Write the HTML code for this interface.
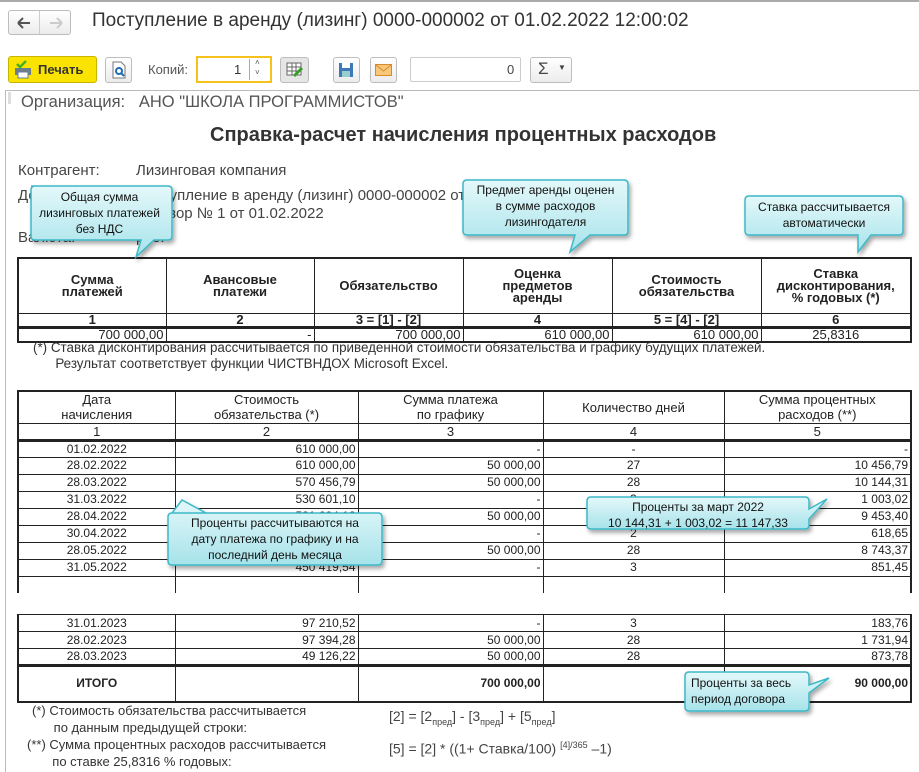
<!DOCTYPE html>
<html><head><meta charset="utf-8">
<style>
*{box-sizing:border-box;margin:0;padding:0}
body{width:919px;height:772px;background:#fff;font-family:"Liberation Sans",sans-serif;color:#333;position:relative;overflow:hidden}
.a{position:absolute}
.btn{position:absolute;border:1px solid #bdbdbd;border-radius:3px;background:linear-gradient(#fff,#ececec)}
table{border-collapse:collapse;position:absolute;font-size:12px;color:#222}
td{border:1px solid #222;padding:0 2px;text-align:center;white-space:nowrap}
.r{text-align:right}
.t1 td{height:13px;line-height:12px}
.t2 td{height:17px;line-height:15px}
.h td{font-size:13px}
.co{position:absolute;font-size:12px;color:#111;text-align:center;line-height:16px}
</style></head><body>
<div class="a" style="left:0;top:0;width:919px;height:2px;background:#aaa"></div>
<div class="btn" style="left:8px;top:10px;width:63px;height:25px"></div>
<div class="a" style="left:39px;top:11px;width:1px;height:23px;background:#ccc"></div>
<svg class="a" style="left:16px;top:16px" width="50" height="14"><path d="M2 7h12M2 7l5-5M2 7l5 5" stroke="#555" stroke-width="2" fill="none"/><path d="M34 7h12M46 7l-5-5M46 7l-5 5" stroke="#ccc" stroke-width="2" fill="none"/></svg>
<div class="a" style="left:92px;top:10px;font-size:19px;color:#333">Поступление в аренду (лизинг) 0000-000002 от 01.02.2022 12:00:02</div>

<div class="a" style="left:8px;top:56px;width:89px;height:27px;background:#fbe300;border:1px solid #c9b400;border-radius:3px"></div>
<svg class="a" style="left:13px;top:60px" width="20" height="20"><rect x="2" y="8" width="16" height="7" fill="#6b7c8e"/><rect x="5" y="12" width="10" height="6" fill="#fff" stroke="#6b7c8e"/><path d="M4 4l3 3 6-6" stroke="#4caf1e" stroke-width="2.5" fill="none"/></svg>
<div class="a" style="left:38px;top:62px;font-size:13px;font-weight:bold;color:#333">Печать</div>
<div class="btn" style="left:105px;top:57px;width:27px;height:26px"></div>
<svg class="a" style="left:111px;top:61px" width="16" height="18"><path d="M2 1h8l4 4v12H2z" fill="#fff" stroke="#777"/><circle cx="8" cy="10" r="3" fill="none" stroke="#1d6db5" stroke-width="2"/><path d="M10 12l3 3" stroke="#1d6db5" stroke-width="2"/></svg>
<div class="a" style="left:148px;top:62px;font-size:13px;color:#555">Копий:</div>
<div class="a" style="left:196px;top:56px;width:76px;height:27px;border:2px solid #f5c21b;background:#fff"></div>
<div class="a" style="left:234px;top:62px;font-size:13px;color:#333">1</div>
<div class="a" style="left:249px;top:59px;width:1px;height:21px;background:#aaa"></div>
<div class="a" style="left:255px;top:58px;font-size:8px;color:#555;line-height:10px">˄<br>˅</div>
<div class="btn" style="left:280px;top:57px;width:29px;height:26px;background:#e6e6e6"></div>
<svg class="a" style="left:286px;top:62px" width="18" height="16"><rect x="1" y="1" width="14" height="12" fill="#fff" stroke="#666"/><path d="M1 5h14M1 9h14M6 1v12M10 1v12" stroke="#666"/><path d="M8 14l8-8" stroke="#3a9c2a" stroke-width="3"/></svg>
<div class="btn" style="left:333px;top:57px;width:27px;height:26px"></div>
<svg class="a" style="left:338px;top:62px" width="16" height="16"><rect x="1" y="1" width="14" height="14" fill="#3d78b8"/><rect x="4" y="1" width="8" height="5" fill="#fff"/><rect x="4" y="9" width="8" height="6" fill="#9cc"/></svg>
<div class="btn" style="left:370px;top:57px;width:27px;height:26px"></div>
<svg class="a" style="left:375px;top:64px" width="17" height="12"><rect x=".5" y=".5" width="16" height="11" fill="#f8c87a" stroke="#d88a2a"/><path d="M1 1l7.5 6 7.5-6" stroke="#d88a2a" fill="none"/></svg>
<div class="a" style="left:410px;top:57px;width:111px;height:25px;border:1px solid #ccc;border-radius:2px"></div>
<div class="a" style="left:507px;top:62px;font-size:13px;color:#444">0</div>
<div class="btn" style="left:530px;top:57px;width:42px;height:26px"></div>
<div class="a" style="left:538px;top:59px;font-size:17px;color:#444">Σ</div>
<div class="a" style="left:558px;top:63px;font-size:8px;color:#444">▼</div>

<div class="a" style="left:5px;top:90px;width:914px;height:1px;background:#bbb"></div>
<div class="a" style="left:5px;top:90px;width:1px;height:682px;background:#bbb"></div>
<div class="a" style="left:8px;top:92px;width:3px;height:12px;background:#ddd"></div>
<div class="a" style="left:21px;top:93px;font-size:16.5px;color:#555">Организация:&nbsp;&nbsp; АНО "ШКОЛА ПРОГРАММИСТОВ"</div>
<div class="a" style="left:210px;top:124px;font-size:20px;font-weight:bold;color:#333">Справка-расчет начисления процентных расходов</div>
<div class="a" style="left:18px;top:162px;font-size:15px;color:#444">Контрагент:</div>
<div class="a" style="left:136px;top:162px;font-size:15px;color:#444">Лизинговая компания</div>
<div class="a" style="left:18px;top:187px;font-size:15px;color:#444">Договор:</div>
<div class="a" style="left:136px;top:187px;font-size:15px;color:#444">Поступление в аренду (лизинг) 0000-000002 от 01.02.2022</div>
<div class="a" style="left:136px;top:205px;font-size:15px;color:#444">Договор № 1 от 01.02.2022</div>
<div class="a" style="left:18px;top:229px;font-size:15px;color:#444">Валюта:</div>
<div class="a" style="left:136px;top:229px;font-size:15px;color:#444">руб.</div>

<table class="t1 h" style="left:17px;top:257px;width:895px;border:2px solid #222">
<tr style="font-weight:bold;height:55px"><td style="width:148px">Сумма<br>платежей</td><td style="width:148px">Авансовые<br>платежи</td><td style="width:149px">Обязательство</td><td style="width:149px">Оценка<br>предметов<br>аренды</td><td style="width:149px">Стоимость<br>обязательства</td><td>Ставка<br>дисконтирования,<br>% годовых (*)</td></tr>
<tr style="font-weight:bold;border-bottom:3px solid #222"><td>1</td><td>2</td><td>3 = [1] - [2]</td><td>4</td><td>5 = [4] - [2]</td><td>6</td></tr>
<tr><td class="r">700 000,00</td><td class="r">-</td><td class="r">700 000,00</td><td class="r">610 000,00</td><td class="r">610 000,00</td><td>25,8316</td></tr>
</table>
<div class="a" style="left:33px;top:340px;font-size:13.4px;color:#333;line-height:16px">(*) Ставка дисконтирования рассчитывается по приведенной стоимости обязательства и графику будущих платежей.<br>&nbsp;&nbsp;&nbsp;&nbsp;&nbsp; Результат соответствует функции ЧИСТВНДОХ Microsoft Excel.</div>

<table class="t2" style="left:17px;top:390px;width:895px;border:2px solid #222;border-bottom:none">
<tr class="h" style="height:32px"><td style="width:157px">Дата<br>начисления</td><td style="width:183px">Стоимость<br>обязательства (*)</td><td style="width:185px">Сумма платежа<br>по графику</td><td style="width:181px">Количество дней</td><td>Сумма процентных<br>расходов (**)</td></tr>
<tr class="h" style="border-bottom:3px solid #222"><td style="height:14px;line-height:13px">1</td><td>2</td><td>3</td><td>4</td><td>5</td></tr>
<tr><td>01.02.2022</td><td class="r">610 000,00</td><td class="r">-</td><td>-</td><td class="r">-</td></tr>
<tr><td>28.02.2022</td><td class="r">610 000,00</td><td class="r">50 000,00</td><td>27</td><td class="r">10 456,79</td></tr>
<tr><td>28.03.2022</td><td class="r">570 456,79</td><td class="r">50 000,00</td><td>28</td><td class="r">10 144,31</td></tr>
<tr><td>31.03.2022</td><td class="r">530 601,10</td><td class="r">-</td><td>3</td><td class="r">1 003,02</td></tr>
<tr><td>28.04.2022</td><td class="r">531 604,12</td><td class="r">50 000,00</td><td>28</td><td class="r">9 453,40</td></tr>
<tr><td>30.04.2022</td><td class="r">491 057,52</td><td class="r">-</td><td>2</td><td class="r">618,65</td></tr>
<tr><td>28.05.2022</td><td class="r">491 676,17</td><td class="r">50 000,00</td><td>28</td><td class="r">8 743,37</td></tr>
<tr><td>31.05.2022</td><td class="r">450 419,54</td><td class="r">-</td><td>3</td><td class="r">851,45</td></tr>
<tr><td style="height:6px;border-bottom:none"></td><td style="border-bottom:none"></td><td style="border-bottom:none"></td><td style="border-bottom:none"></td><td style="border-bottom:none"></td></tr>
</table>

<table class="t2" style="left:17px;top:614px;width:895px;border:2px solid #222;border-top:none">
<tr><td style="width:157px">31.01.2023</td><td class="r" style="width:183px">97 210,52</td><td class="r" style="width:185px">-</td><td style="width:181px">3</td><td class="r">183,76</td></tr>
<tr><td>28.02.2023</td><td class="r">97 394,28</td><td class="r">50 000,00</td><td>28</td><td class="r">1 731,94</td></tr>
<tr style="border-bottom:3px solid #222"><td>28.03.2023</td><td class="r">49 126,22</td><td class="r">50 000,00</td><td>28</td><td class="r">873,78</td></tr>
<tr style="height:36px;font-weight:bold"><td>ИТОГО</td><td></td><td class="r">700 000,00</td><td></td><td class="r">90 000,00</td></tr>
</table>

<div class="a" style="left:32px;top:702px;font-size:13px;color:#333;line-height:17px">(*) Стоимость обязательства рассчитывается<br>&nbsp;&nbsp;&nbsp;&nbsp;&nbsp; по данным предыдущей строки:</div>
<div class="a" style="left:27px;top:736px;font-size:13px;color:#333;line-height:17px">(**) Сумма процентных расходов рассчитывается<br>&nbsp;&nbsp;&nbsp;&nbsp;&nbsp;&nbsp; по ставке 25,8316 % годовых:</div>
<div class="a" style="left:389px;top:708px;font-size:14px;color:#444">[2] = [2<sub style="font-size:9px">пред</sub>] - [3<sub style="font-size:9px">пред</sub>] + [5<sub style="font-size:9px">пред</sub>]</div>
<div class="a" style="left:389px;top:740px;font-size:14px;color:#444">[5] = [2] * ((1+ Ставка/100) <sup style="font-size:9px">[4]/365</sup> –1)</div>

<svg class="a" style="left:0;top:0" width="919" height="772">
<defs><linearGradient id="g" x1="0" y1="0" x2="0" y2="1"><stop offset="0" stop-color="#e4f8fa"/><stop offset="1" stop-color="#a6e3ea"/></linearGradient>
<filter id="s"><feDropShadow dx="2" dy="3" stdDeviation="2" flood-opacity=".35"/></filter></defs>
<g fill="url(#g)" stroke="#3cb8c7" stroke-width="1.5" filter="url(#s)">
<path d="M31 186h137q4 0 4 4v46q0 4-4 4h-14l-18 17 5-17h-106q-4 0-4-4v-46q0-4 4-4z"/>
<path d="M467 180h157q4 0 4 4v47q0 4-4 4h-34l-20 17 5-17h-108q-4 0-4-4v-47q0-4 4-4z"/>
<path d="M749 196h150q4 0 4 4v31q0 4-4 4h-28l-13 17 0-17h-109q-4 0-4-4v-31q0-4 4-4z"/>
<path d="M172 513h206q4 0 4 4v44q0 4-4 4h-206q-4 0-4-4v-44q0-4 4-4h34l-24-13z"/>
<path d="M591 497h214q4 0 4 4v8l18-10-18 20v6q0 4-4 4h-214q-4 0-4-4v-24q0-4 4-4z"/>
<path d="M689 672h116q4 0 4 4v9l20-7-20 15v14q0 4-4 4h-116q-4 0-4-4v-31q0-4 4-4z"/>
</g></svg>
<div class="co" style="left:27px;top:189px;width:145px">Общая сумма<br>лизинговых платежей<br>без НДС</div>
<div class="co" style="left:463px;top:182px;width:165px">Предмет аренды оценен<br>в сумме расходов<br>лизингодателя</div>
<div class="co" style="left:745px;top:199px;width:158px">Ставка рассчитывается<br>автоматически</div>
<div class="co" style="left:168px;top:515px;width:214px">Проценты рассчитываются на<br>дату платежа по графику и на<br>последний день месяца</div>
<div class="co" style="left:587px;top:499px;width:222px">Проценты за март 2022<br>10 144,31 + 1 003,02 = 11 147,33</div>
<div class="co" style="left:685px;top:675px;width:124px;text-align:left;padding-left:6px">Проценты за весь<br>период договора</div>
</body></html>
